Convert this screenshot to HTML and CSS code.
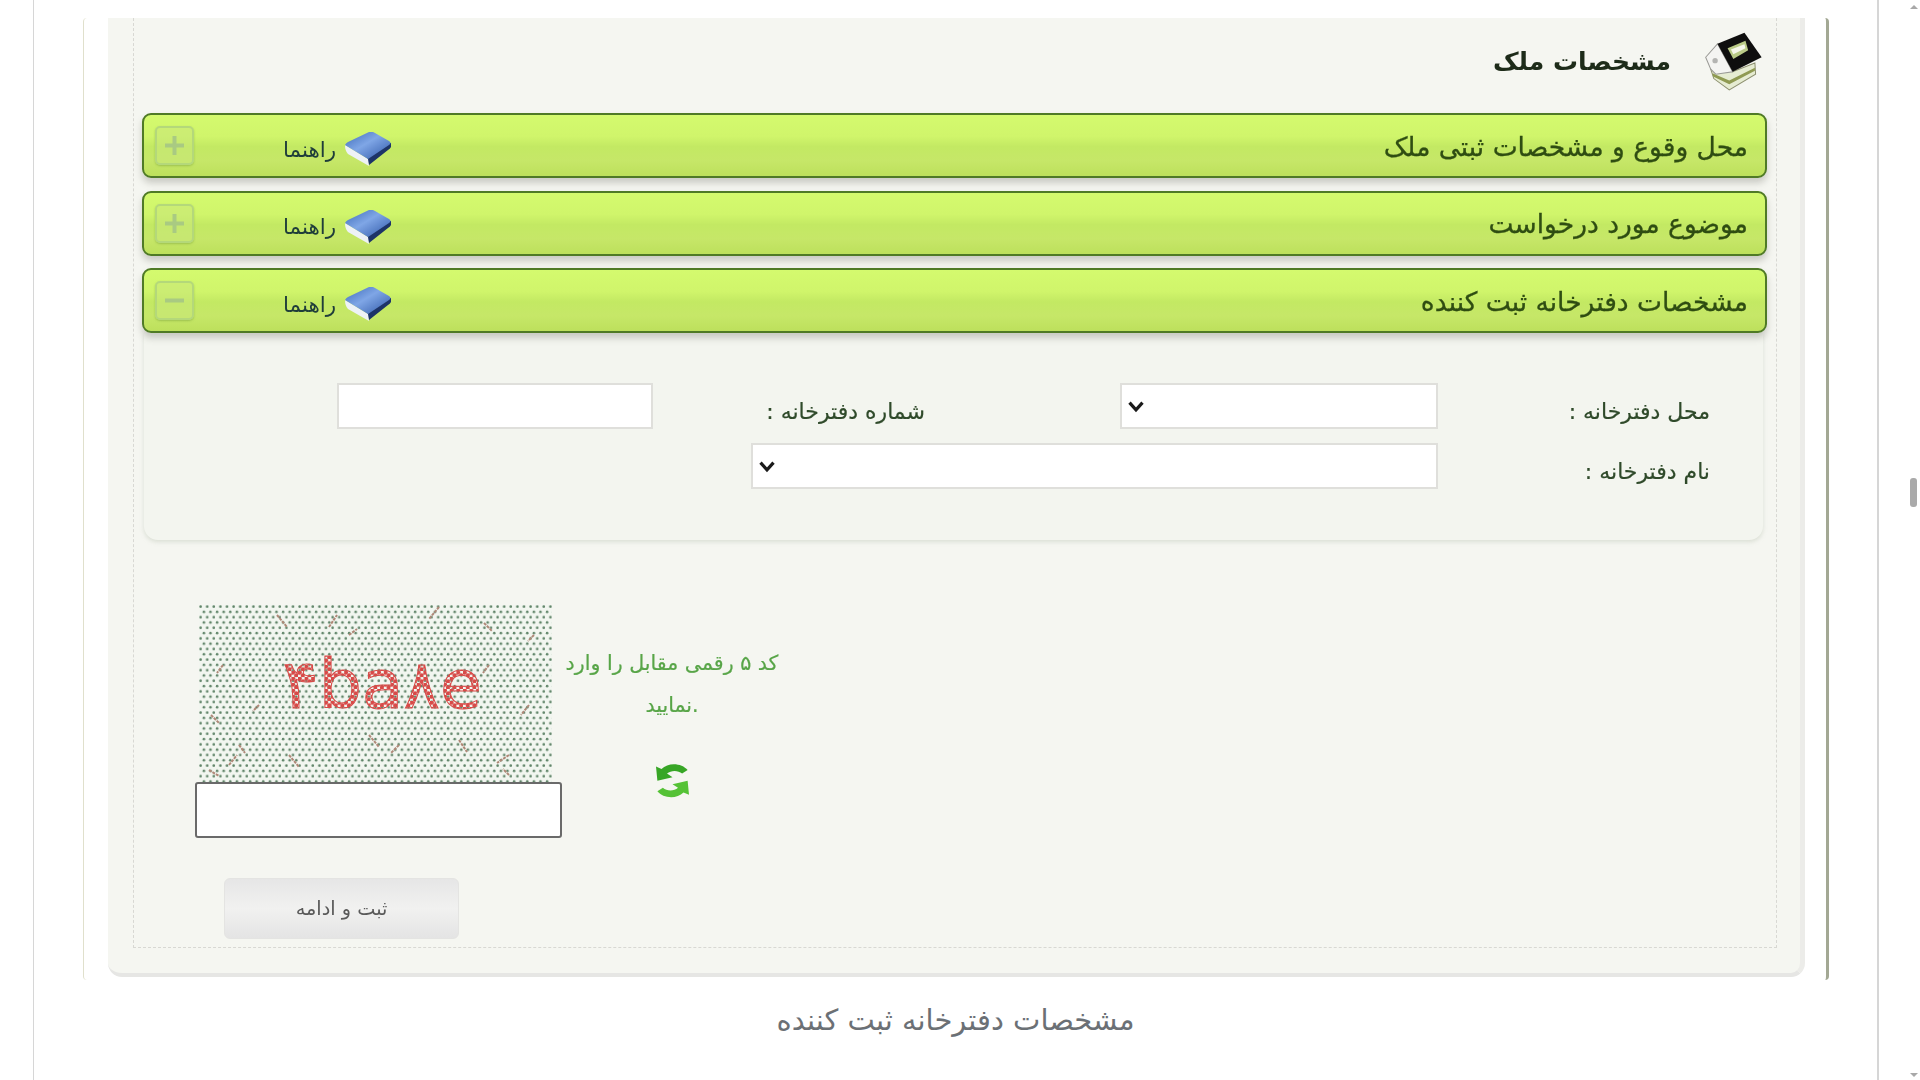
FILE: index.html
```html
<!DOCTYPE html>
<html lang="fa">
<head>
<meta charset="utf-8">
<title>مشخصات دفترخانه ثبت کننده</title>
<link rel="stylesheet" href="styles.css">
</head>
<body>
<svg class="defs" aria-hidden="true">
  <defs>
    <linearGradient id="bookTop" x1="0" y1="0" x2="1" y2="1">
      <stop offset="0" stop-color="#3b69b8"/>
      <stop offset="0.45" stop-color="#7fa6e6"/>
      <stop offset="1" stop-color="#2f58a8"/>
    </linearGradient>
    <symbol id="book" viewBox="0 0 46 35">
      <path d="M46 11V15Q45 17 43 18L24 33L22 27L44 11Z" fill="#1d3468"/>
      <path d="M0 13L23 27L24 34L3 22Q0 19 0 13Z" fill="#eef2f6"/>
      <path d="M0 13Q1 11 3 10L24 0Q27 -1 30 1L44 9Q47 11 44 13L23 27Z" fill="url(#bookTop)"/>
    </symbol>
  </defs>
</svg>
<main class="page">
  <figure class="figure">
    <div class="frame">
      <div class="panel">
        <div class="inner" dir="rtl">
          <header class="head">
            <svg class="house" viewBox="78 38 172 176" aria-hidden="true">
              <path d="M95 150L160 158L226 132L228 165L150 212L104 178Z" fill="#e6ecd2" stroke="#8d9070" stroke-width="3"/>
              <path d="M100 162L150 184L226 146L226 155L150 195L102 172Z" fill="#8f9a52"/>
              <path d="M80 115L115 75L160 158L110 165L95 150Z" fill="#f4f4f2" stroke="#9a9a96" stroke-width="3"/>
              <path d="M115 75L195 42L246 115L160 158Z" fill="#0e0e0e"/>
              <path d="M145 88L198 66L206 94L162 120Z" fill="#b9ca86"/>
              <path d="M155 92L195 76L198 88L162 106Z" fill="#f5f7ea"/>
              <circle cx="108" cy="125" r="8" fill="#b4b4b2"/>
            </svg>
            <h2 class="head-title">مشخصات ملک</h2>
          </header>

          <section class="accordion">
            <div class="bar">
              <span class="bar-title">محل وقوع و مشخصات ثبتی ملک</span>
              <span class="help">
                <svg class="book" aria-hidden="true"><use href="#book"/></svg>
                <span class="help-text">راهنما</span>
              </span>
              <span class="toggle"><svg viewBox="0 0 35 35" aria-hidden="true"><path d="M17.5 8V27M8 17.5H27" class="toggle-mark"/></svg></span>
            </div>
            <div class="bar">
              <span class="bar-title">موضوع مورد درخواست</span>
              <span class="help">
                <svg class="book" aria-hidden="true"><use href="#book"/></svg>
                <span class="help-text">راهنما</span>
              </span>
              <span class="toggle"><svg viewBox="0 0 35 35" aria-hidden="true"><path d="M17.5 8V27M8 17.5H27" class="toggle-mark"/></svg></span>
            </div>
            <div class="bar">
              <span class="bar-title">مشخصات دفترخانه ثبت کننده</span>
              <span class="help">
                <svg class="book" aria-hidden="true"><use href="#book"/></svg>
                <span class="help-text">راهنما</span>
              </span>
              <span class="toggle"><svg viewBox="0 0 35 35" aria-hidden="true"><path d="M8 17.5H27" class="toggle-mark"/></svg></span>
            </div>
          </section>

          <form class="office-form">
            <div class="form-row">
              <label class="form-label">محل دفترخانه :</label>
              <div class="field field-small">
                <svg class="chevron" viewBox="0 0 16 12" aria-hidden="true"><path d="M2 2.5L8 9L14 2.5"/></svg>
              </div>
              <label class="form-label form-label-second">شماره دفترخانه :</label>
              <div class="field field-number"></div>
            </div>
            <div class="form-row">
              <label class="form-label">نام دفترخانه :</label>
              <div class="field field-wide">
                <svg class="chevron" viewBox="0 0 16 12" aria-hidden="true"><path d="M2 2.5L8 9L14 2.5"/></svg>
              </div>
            </div>
          </form>

          <section class="captcha" dir="ltr">
            <div class="captcha-col">
              <svg class="captcha-img" viewBox="0 0 353 177" aria-label="کد امنیتی">
                <defs>
                  <pattern id="dots" width="6.6" height="10.6" patternUnits="userSpaceOnUse">
                    <circle cx="1.6" cy="1.6" r="1.3" fill="#5f8468"/>
                    <circle cx="4.9" cy="6.9" r="1.3" fill="#5f8468"/>
                  </pattern>
                  <pattern id="stitch" width="6.6" height="6" patternUnits="userSpaceOnUse">
                    <circle cx="1.6" cy="1.5" r="2.2" fill="#d84a48"/>
                    <circle cx="4.9" cy="4.5" r="2.2" fill="#d84a48"/>
                  </pattern>
                </defs>
                <rect width="353" height="177" fill="#f2f6f0"/>
                <rect width="353" height="177" fill="url(#dots)"/>
                <g class="noise">
                  <path d="M78 10l10 12M130 22l8 -12M240 2l-10 12M285 18l8 8M24 60l-6 8M12 110l8 8M30 160l8 -10M90 150l10 12M170 130l10 12M200 140l-8 8M260 135l8 12M310 150l-12 8M330 100l-8 10M335 30l-6 6M290 60l-6 8M40 140l6 8M60 100l-6 6M250 80l6 6M150 30l8 -6M10 165l10 6M310 170l-6 -6"/>
                </g>
                <text class="captcha-code" x="183" y="103" text-anchor="middle" fill="url(#stitch)">۴ba۸e</text>
              </svg>
              <div class="captcha-input"></div>
            </div>
            <div class="captcha-side">
              <p class="captcha-text">کد ۵ رقمی مقابل را وارد نمایید.</p>
              <svg class="refresh" viewBox="3 3 24 30.5" preserveAspectRatio="none" aria-hidden="true">
                <path d="M26 9C22 3 12 2 7 8L3 6L4 18L15 15L11 12C14 9 19 9 22 12Z" fill="#37a626"/>
                <path d="M4 27C8 33 18 34 23 28L27 30L26 18L15 21L19 24C16 27 11 27 8 24Z" fill="#55c236"/>
              </svg>
            </div>
          </section>

          <div class="actions" dir="ltr">
            <button class="submit" type="button" dir="rtl">ثبت و ادامه</button>
          </div>
        </div>
      </div>
    </div>
    <figcaption class="caption" dir="rtl">مشخصات دفترخانه ثبت کننده</figcaption>
  </figure>
</main>
<aside class="scrollbar" aria-hidden="true">
  <span class="arrow-up"></span>
  <span class="thumb"></span>
  <span class="arrow-down"></span>
</aside>
</body>
</html>
```

FILE: styles.css
```css
* { box-sizing: border-box; }

html, body { height: 100%; }

body {
  margin: 0;
  padding-left: 33px;
  display: flex;
  height: 1080px;
  overflow: hidden;
  background: #fff;
  font-family: "DejaVu Sans", sans-serif;
  color: #222;
}

.defs { width: 0; height: 0; flex: none; }

.page {
  width: 1846px;
  height: 1080px;
  flex: none;
  border-left: 1px solid #d6d6d6;
  border-right: 2px solid #d6d6d6;
}

.figure { margin: 18px 0 0; }

.frame {
  margin-left: 49px;
  width: 1746px;
  height: 962px;
  border-left: 1px solid #e0e0cc;
  border-right: 3px solid #a3a894;
  border-radius: 4px;
}

.panel {
  margin: 0 21px 0 24px;
  height: 959px;
  padding: 0 0 25px 25px;
  background: #f5f6f1;
  border-right: 5px solid #ecece9;
  border-bottom: 4px solid #e6e6e4;
  border-radius: 0 0 14px 14px;
  filter: blur(0.5px);
}

.inner {
  margin-right: 23px;
  height: 930px;
  padding: 0 9px 0 8px;
  border: 1px dashed #d8d8d3;
  border-top: 0;
}

.head {
  height: 95px;
  display: flex;
  align-items: flex-start;
  padding: 13px 4px 0 0;
}

.house { width: 58px; height: 60px; flex: none; }

.head-title {
  margin: 13px 34px 0 0;
  font-size: 25px;
  line-height: 36px;
  font-weight: 700;
  color: #1d2b19;
}

.accordion {
  display: flex;
  flex-direction: column;
  gap: 12.5px;
}

.bar {
  height: 65px;
  display: flex;
  align-items: center;
  padding: 0 17px 0 11px;
  border: 2px solid #4f7a26;
  border-radius: 9px;
  background: linear-gradient(#d4fa6e 0%, #d0f56b 35%, #c3e963 52%, #c6e768 75%, #bde05c 100%);
  box-shadow: 0 5px 7px rgba(90, 90, 80, 0.28);
}

.bar-title {
  flex: 1;
  padding-top: 2px;
  font-size: 26.5px;
  line-height: 36px;
  color: #2f4d12;
  -webkit-text-stroke: 0.3px #2f4d12;
}

.help {
  display: flex;
  align-items: center;
  gap: 9px;
  margin: 8px 0 0 89px;
}

.book { width: 46px; height: 35px; flex: none; }

.help-text {
  font-size: 21.5px;
  line-height: 30px;
  color: #1f3d3a;
}

.toggle {
  width: 39px;
  height: 39px;
  display: block;
  border: 2px solid #b4d87a;
  border-radius: 5px;
  background: rgba(200, 232, 120, 0.6);
  box-shadow: 0 1px 2px rgba(120, 160, 60, 0.5);
}

.toggle svg { display: block; width: 35px; height: 35px; }

.toggle-mark {
  fill: none;
  stroke: #a9ca82;
  stroke-width: 4;
}

.office-form {
  margin: 0 4px 0 2px;
  padding: 50px 53px 51px 0;
  background: #f3f5ef;
  border-radius: 0 0 14px 14px;
  box-shadow: 0 2px 4px rgba(170, 180, 160, 0.35);
}

.form-row {
  display: flex;
  align-items: flex-start;
  height: 46px;
  margin-bottom: 14px;
}

.form-row:last-child { margin-bottom: 0; }

.form-label {
  width: 272px;
  flex: none;
  padding-top: 12px;
  font-size: 22px;
  line-height: 34px;
  color: #2f4a2a;
  -webkit-text-stroke: 0.2px #2f4a2a;
}

.form-label-second { margin-right: 195px; }

.field {
  height: 46px;
  flex: none;
  display: flex;
  align-items: center;
  justify-content: flex-end;
  padding-left: 5px;
  background: #fff;
  border: 2px solid #dfdfdb;
}

.field-small { width: 318px; }
.field-number { width: 316px; }
.field-wide { width: 687px; }

.chevron {
  width: 18px;
  height: 13px;
  fill: none;
  stroke: #1a1a1a;
  stroke-width: 3;
}

.captcha {
  display: flex;
  margin-top: 65px;
  padding-left: 53px;
}

.captcha-col {
  width: 367px;
  flex: none;
  display: flex;
  flex-direction: column;
}

.captcha-img {
  display: block;
  width: 353px;
  height: 177px;
  margin-left: 4px;
}

.noise path {
  fill: none;
  stroke: #b08878;
  stroke-width: 2;
  stroke-dasharray: 3 1;
}

.captcha-code {
  font-family: "DejaVu Sans", sans-serif;
  font-size: 68px;
  font-weight: 400;
  stroke: #d84a48;
  stroke-width: 1;
}

.captcha-side {
  width: 220px;
  flex: none;
  display: flex;
  flex-direction: column;
  align-items: center;
  padding-top: 37px;
}

.captcha-input {
  height: 56px;
  background: #fff;
  border: 2px solid #6a6a6a;
  border-radius: 3px;
}

.captcha-text {
  margin: 0;
  text-align: center;
  font-size: 20.6px;
  line-height: 42px;
  color: #58a548;
  -webkit-text-stroke: 0.2px #58a548;
}

.refresh {
  width: 33px;
  height: 36px;
  margin-top: 37px;
}

.actions {
  margin-top: 40px;
  padding-left: 82px;
}

.submit {
  display: block;
  width: 235px;
  height: 61px;
  padding: 0;
  border: 1px solid #e4e4e2;
  border-radius: 6px;
  background: linear-gradient(#e6e6e6, #f1f1f0 50%, #e4e4e4);
  font-family: "DejaVu Sans", sans-serif;
  font-size: 19.3px;
  color: #5a5a5a;
}

.caption {
  margin-top: 20px;
  text-align: center;
  font-size: 29px;
  line-height: 40px;
  color: #6b7075;
}

.scrollbar {
  flex: 1;
  display: flex;
  flex-direction: column;
  align-items: flex-end;
  padding: 5px 2px 3px 0;
}

.arrow-up {
  width: 0;
  height: 0;
  border: 4px solid transparent;
  border-top: 0;
  border-bottom: 4px solid #a8a8a8;
}

.thumb {
  width: 7px;
  height: 29px;
  margin-top: 469px;
  margin-right: 1px;
  background: #aaa;
  border-radius: 3px;
}

.arrow-down {
  width: 0;
  height: 0;
  margin-top: auto;
  border: 4px solid transparent;
  border-bottom: 0;
  border-top: 4px solid #a8a8a8;
}
```
